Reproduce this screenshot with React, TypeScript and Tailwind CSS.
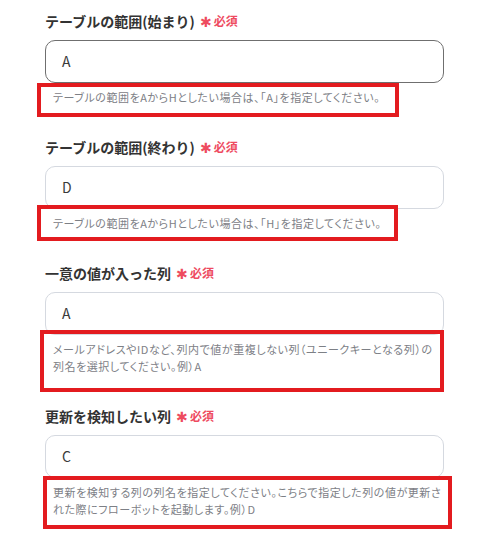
import React from 'react';

type Field = {
  label: string;
  value: string;
  help: string[];
  focused?: boolean;
  box: string; // red annotation frame, placed over the helper text
};

const fields: Field[] = [
  {
    label: 'テーブルの範囲(始まり)',
    value: 'A',
    help: ['テーブルの範囲をAからHとしたい場合は、「A」を指定してください。'],
    focused: true,
    box: 'top-0 -left-[8px] w-[362px] h-[34px]',
  },
  {
    label: 'テーブルの範囲(終わり)',
    value: 'D',
    help: ['テーブルの範囲をAからHとしたい場合は、「H」を指定してください。'],
    box: '-top-[4px] -left-[8px] w-[361px] h-[36px]',
  },
  {
    label: '一意の値が入った列',
    value: 'A',
    help: [
      'メールアドレスやIDなど、列内で値が重複しない列（ユニークキーとなる列）の',
      '列名を選択してください。例）A',
    ],
    box: '-top-[5px] -left-[5px] w-[404px] h-[62px]',
  },
  {
    label: '更新を検知したい列',
    value: 'C',
    help: [
      '更新を検知する列の列名を指定してください。こちらで指定した列の値が更新さ',
      'れた際にフローボットを起動します。例）D',
    ],
    box: '-top-[2px] -left-[2px] w-[409px] h-[53px]',
  },
];

function FormField({ field }: { field: Field }) {
  return (
    <div className="flex flex-col">
      {/* Label */}
      <div className="flex items-center h-[20px]">
        <span className="text-[14px] font-bold text-[#333333] leading-[20px]">{field.label}</span>
        <span className="ml-[5px] text-[14px] font-normal text-[#ee4b5f] leading-[20px]">✱</span>
        <span className="ml-[2px] text-[12px] font-bold text-[#ee4b5f] leading-[20px]">必須</span>
      </div>

      {/* Input */}
      <div
        className={`mt-[9px] h-[43px] rounded-[10px] border bg-white flex items-center pl-[16px] text-[14px] text-[#3a3a3a] ${
          field.focused ? 'border-[#6f6f6f]' : 'border-[#d5d9e0]'
        }`}
      >
        {field.value}
      </div>

      {/* Helper */}
      <div className="relative pt-[6px]">
        <div className="pl-[8px] text-[11px] leading-[17px] text-[#7d8086] [font-feature-settings:'palt'] tracking-[0.55px]">
          {field.help.map((line) => (
            <div key={line} className="whitespace-nowrap">{line}</div>
          ))}
        </div>
        <div className={`absolute border-[4px] border-[#e31b1f] ${field.box}`} />
      </div>
    </div>
  );
}

export default function App() {
  return (
    <div
      className="w-[495px] h-[541px] bg-white overflow-hidden"
      style={{ fontFamily: '"Noto Sans CJK JP", "Noto Sans", sans-serif' }}
    >
      <div className="ml-[45px] w-[399px] pt-[11px] flex flex-col gap-[31px]">
        {fields.map((f) => (
          <FormField key={f.label} field={f} />
        ))}
      </div>
    </div>
  );
}
